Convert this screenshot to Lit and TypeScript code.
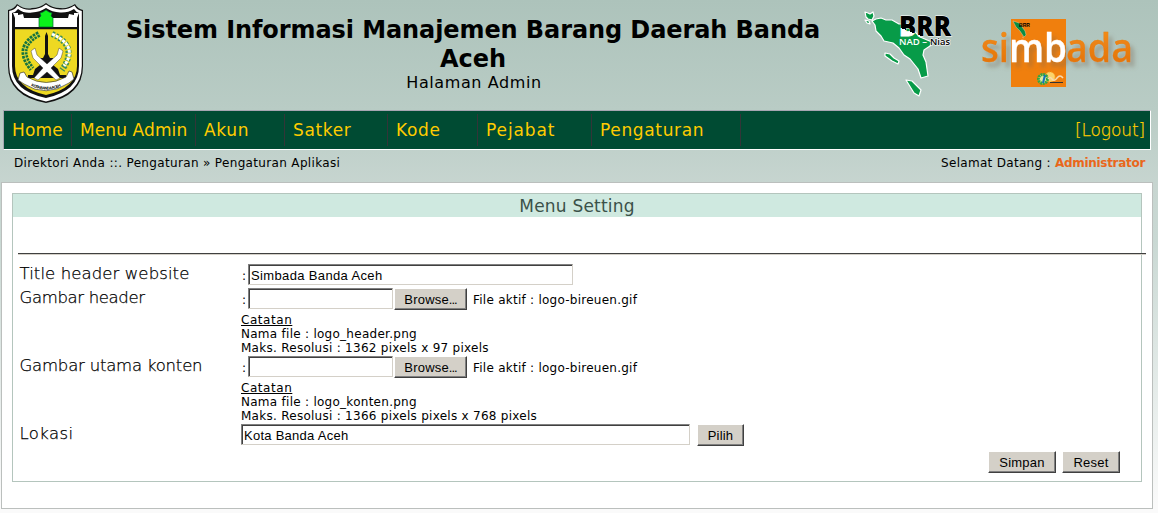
import { LitElement, html, css, svg } from "lit";
import { customElement } from "lit/decorators.js";

const crest = svg`
<path d="M8 10Q14 9 17 4Q25 10 32 8Q40 8 46 3Q52 8 60 8Q68 9 75 4Q78 9 83 10V66Q83 96 46 103Q8 96 8 66Z" fill="#111"/>
<path d="M9.200 11Q15 10 17.500 5.500Q25 11 32 9.500Q40 9 46 4.500Q52 9 60 9.500Q68 10 74.500 5.500Q77 10 81.800 11V66Q81.500 94 46 101.500Q9.500 94 9.200 66Z" fill="#fff"/>
<path d="M12 13Q16 12 18 9Q25 14 32 12.500Q40 12 46 8Q52 12 60 12.500Q68 13 74 9Q76 12 79 13V66Q79 91 46 98Q12 91 12 66Z" fill="#111"/>
<path d="M15 28H77V66Q77 88 46 95Q15 88 15 66Z" fill="#eed922"/>
<path d="M15 27V18L13 13H18V15L23 14L24 18H39V27ZM77 27V18L79 13H74V15L69 14L68 18H53V27Z" fill="#fff"/>
<path d="M39 27V18L41 16L40 13L43 12L46 10L49 12L52 13L51 16L53 18V27Z" fill="#0bf31a" stroke="#063" stroke-width=".7"/>
<path d="M15 28.500H77" stroke="#111" stroke-width="1.500"/>
<path d="M39 34Q14 47 32 69" fill="none" stroke="#16733e" stroke-width="6" stroke-dasharray="2.500 1"/>
<path d="M39 34Q14 47 32 69" fill="none" stroke="#e9df48" stroke-width=".8"/>
<path d="M52 34Q79 46 62 70" fill="none" stroke="#3c8d59" stroke-width="6" stroke-dasharray="2.500 1.500"/>
<path d="M52 34Q79 46 64 66" fill="none" stroke="#fff" stroke-width="3" stroke-dasharray="3 1"/>
<path d="M46.500 32L48 36V54L50 58H53V65L58 69L60 75H66V78H28V75H33L35 69L40 65V58H43L45 54V36Z" fill="#111"/>
<path d="M31 51L35 48L37 55L47 64L57 55L59 48L63 51L61 58L51 68L60 78L56 80L47 72L38 80L34 78L43 68L33 58Z" fill="#fff" stroke="#222" stroke-width=".4"/>
<path d="M20 73L24 72L27 77Q46 88 66 77L69 71L72 72L74 79L69 83Q46 98 24 84L18 80Z" fill="#fff" stroke="#222" stroke-width=".6"/>
<path id="ribbon" d="M31 86Q46 93 62 86" fill="none"/>
<text font-size="4" font-weight="bold" font-family="Liberation Sans, sans-serif"><textPath href="#ribbon" textLength="31">KOTA BANDA ACEH</textPath></text>`;

const island = svg`
<g fill="#079b48" stroke="#fff" stroke-width="1.200" stroke-linejoin="round">
<path d="M872 21L876 19L881 18L886 20L892 20L899 24L905 24L914 31L920 37L932 42L930 46L924 50L923 55L926 62L928 76L921 78L918 69L910 59L904 55L899 48L893 43L884 41L881 36L876 31L875 25Z"/>
<path d="M865 12L868 13L870 14L873 12L874 16L872 20L868 19L866 17ZM865 20L869 21L870 24L867 23Z"/>
<path d="M885 53L890 54L894 58L899 61L898 64L892 61L885 56ZM906 80L912 81L921 90L919 96L914 93Z"/>
</g>`;

@customElement("app-root")
export class AppRoot extends LitElement {
  static styles = css`
    :host {
      display: block;
      box-sizing: border-box;
      width: 1158px;
      height: 513px;
      overflow: hidden;
      color: #000;
      font: 13px/14px "DejaVu Sans", sans-serif;
      background: linear-gradient(#adc3bb 0, #b9ccc5 110px, #c7d5d0 185px, #c9d8d3 240px, #fafafa 505px);
    }
    * { box-sizing: border-box; }
    .header { position: relative; height: 110px; padding: 16px 0 0 98px; }
    .art { position: absolute; inset: 0; width: 1158px; height: 110px; }
    .title { position: relative; width: 750px; text-align: center; }
    h1 { margin: 0; font: bold 24px/29px "DejaVu Sans", sans-serif; letter-spacing: -.09px; }
    .sub { padding-left: 2px; font-size: 16px; line-height: 17px; letter-spacing: .6px; }
    nav {
      display: flex; align-items: center; width: 1148px; height: 40px; margin-left: 3px;
      padding: 0 5px 0 0; background: #004b33; border: 1px solid #fff;
      border-top-color: #a6a6b2; border-left-color: #a6a6b2;
      color: #fc0; font-size: 17px; letter-spacing: .65px;
    }
    .item { height: 32px; padding-left: 8px; border-right: 1px solid #333538; line-height: 33px; white-space: nowrap; }
    .home { width: 68px; letter-spacing: .2px; } .menu { width: 124px; letter-spacing: .1px; } .akun { width: 89px; }
    .satker { width: 103px; } .kode { width: 90px; } .pejabat { width: 114px; letter-spacing: .9px; } .atur { width: 149px; }
    .logout, .label { font-weight: 200; -webkit-text-stroke: .25px currentColor; }
    .logout { margin-left: auto; letter-spacing: -.1px; }
    .crumbs { display: flex; justify-content: space-between; height: 32px; padding: 6px 13px 0 14px; font-size: 12px; letter-spacing: .34px; }
    .user { letter-spacing: .3px; }
    .crumbs b { color: #e9671b; letter-spacing: -.3px; }
    .panel { width: 1152px; height: 327px; margin-left: 1px; padding: 10px; border: 1px solid #bbbfbd; background: #fff; }
    .box { width: 1130px; height: 289px; border: 1px solid #b4c5bd; }
    h2 { margin: 0; height: 23px; background: #cfe9e0; color: #3b5149; text-align: center; font: 17px/25px "DejaVu Sans", sans-serif; letter-spacing: .2px; }
    .rule { width: 1128px; height: 2px; margin: 36px 0 9px 5px; border-top: 1px solid #404040; border-bottom: 1px solid #d4d0c8; }
    .row { display: grid; grid-template-columns: 221px 1fr; padding-left: 7px; }
    .label { font-size: 16.500px; line-height: 20px; letter-spacing: .1px; margin-left: -.5px; }
    .label.tight { letter-spacing: -.35px; }
    .label.mid { letter-spacing: -.2px; }
    .label.wide { letter-spacing: .4px; }
    .line { display: flex; height: 24px; align-items: flex-start; }
    .colon { width: 7px; padding: 5px 0 0 1px; font-size: 12px; }
    .file { margin-left: 6px; padding-top: 5px; font-size: 12px; letter-spacing: .25px; }
    .notes { font-size: 12px; height: 44px; padding-top: 1px; letter-spacing: .27px; }
    .notes div { height: 14px; white-space: nowrap; }
    .notes u { letter-spacing: .55px; }
    input {
      height: 21px; margin: 0; padding: 1px 1px 0 2px; border: 1px solid; border-radius: 0; outline: 0;
      border-color: #808080 #d4d0c8 #d4d0c8 #808080; box-shadow: inset 1px 1px #404040;
      background: #fff; color: #000;
      font: 13px "Liberation Sans", sans-serif; letter-spacing: .36px;
    }
    button {
      height: 22px; margin: 0; padding: 0; border: 1px solid; border-radius: 0;
      border-color: #fff #404040 #404040 #fff; box-shadow: inset -1px -1px #808080;
      background: #d4d0c8; color: #000; font: 13px/19px "Liberation Sans", sans-serif; letter-spacing: .2px;
    }
    .t1 { width: 325px; } .t2 { width: 145px; } .t3 { width: 449px; letter-spacing: .26px; }
    .browse { width: 73px; margin-left: 1px; } .pilih { width: 47px; margin-left: 7px; }
    .dots { letter-spacing: -1px; }
    .actions { display: flex; justify-content: flex-end; gap: 6px; padding: 3px 21px 0 0; }
    .simpan { width: 68px; } .reset { width: 58px; }
  `;

  upload(label: string, spacing: string, name: string, size: string) {
    return html`<div class="row">
      <span class="label ${spacing}">${label}</span>
      <div>
        <div class="line"><span class="colon">:</span><input class="t2" aria-label=${label}><button class="browse">Browse<span class="dots">...</span></button><span class="file">File aktif : logo-bireuen.gif</span></div>
        <div class="notes"><div><u>Catatan</u></div><div>Nama file : ${name}</div><div>Maks. Resolusi : ${size}</div></div>
      </div>
    </div>`;
  }

  render() {
    return html`
      <header class="header">
        <svg class="art" viewBox="0 0 1158 110">
          <defs>
            <filter id="shade" x="-10%" y="-30%" width="130%" height="180%"><feDropShadow dx="4" dy="5" stdDeviation="2" flood-color="#765" flood-opacity=".4"/></filter>
            <linearGradient id="orange" x2="0" y2="1"><stop stop-color="#f7941d"/><stop offset="1" stop-color="#df6c08"/></linearGradient>
            <linearGradient id="split" gradientUnits="userSpaceOnUse" x1="905" y1="40" x2="912" y2="22"><stop offset=".5" stop-color="#fff"/><stop offset=".5" stop-color="#000"/></linearGradient>
          </defs>
          ${crest}${island}
          <text x="899" y="36" font-family="Open Sans, sans-serif" font-weight="800" font-size="28" fill="url(#split)" stroke="#fff" stroke-width=".8" paint-order="stroke" textLength="52" lengthAdjust="spacingAndGlyphs">BRR</text>
          <g font-family="Open Sans, sans-serif" font-size="9.500" font-weight="600">
            <text x="899" y="45" fill="#fff" textLength="28" lengthAdjust="spacingAndGlyphs">NAD –</text>
            <text x="930" y="45" stroke="#fff" stroke-width="1.200" paint-order="stroke" textLength="20" lengthAdjust="spacingAndGlyphs">Nias</text>
          </g>
          <path d="M1011 19H1066V87H1011Z" fill="#f07f0d"/>
          <path d="M1013 21L1019 23L1025 31L1026 35L1024 37L1020 31L1016 27ZM1022 37L1024 38" fill="#088d42" stroke="#fff" stroke-width=".3"/>
          <text x="1019" y="27" font-size="6" font-weight="bold" font-family="Liberation Sans, sans-serif" textLength="11" lengthAdjust="spacingAndGlyphs">BRR</text>
          <g font-family="Open Sans, sans-serif" font-size="40" font-weight="600" filter="url(#shade)">
            <g fill="url(#orange)" stroke="#e8800f" stroke-width=".3">
              <text x="981" y="62" textLength="28" lengthAdjust="spacingAndGlyphs">si</text>
              <text x="1066" y="62" textLength="67" lengthAdjust="spacingAndGlyphs">ada</text>
            </g>
            <text x="1009" y="62" fill="#fff" stroke="#fff" stroke-width=".3" textLength="58" lengthAdjust="spacingAndGlyphs">mb</text>
          </g>
          <circle cx="1050" cy="77" r="5" fill="#fbd36b" stroke="#ffab29" stroke-dasharray="1 1"/>
          <circle cx="1043" cy="79" r="4.500" fill="#dfe8a0" stroke="#35a642" stroke-width="3" stroke-dasharray="2 .6"/>
          <path d="M1045 75L1043 83" stroke="#1571bd" stroke-width="2"/>
          <path d="M1048 79Q1050 76 1052 79T1057 78T1063 78" fill="none" stroke="#f7d9b0" stroke-width="1.500"/>
          <path d="M1050 82.500H1063" stroke="#333" stroke-width="1"/>
        </svg>
        <div class="title"><h1>Sistem Informasi Manajemen Barang Daerah Banda Aceh</h1><div class="sub">Halaman Admin</div></div>
      </header>
      <nav>
        <span class="item home">Home</span><span class="item menu">Menu Admin</span><span class="item akun">Akun</span>
        <span class="item satker">Satker</span><span class="item kode">Kode</span><span class="item pejabat">Pejabat</span>
        <span class="item atur">Pengaturan</span><span class="logout">[Logout]</span>
      </nav>
      <div class="crumbs"><span>Direktori Anda ::. Pengaturan » Pengaturan Aplikasi</span><span class="user">Selamat Datang : <b>Administrator</b></span></div>
      <main class="panel"><section class="box">
        <h2>Menu Setting</h2>
        <div class="rule"></div>
        <div class="row"><span class="label">Title header website</span>
          <div class="line"><span class="colon">:</span><input class="t1" aria-label="Title header website" .value=${"Simbada Banda Aceh"}></div></div>
        ${this.upload("Gambar header", "tight", "logo_header.png", "1362 pixels x 97 pixels")}
        ${this.upload("Gambar utama konten", "mid", "logo_konten.png", "1366 pixels pixels x 768 pixels")}
        <div class="row"><span class="label wide">Lokasi</span>
          <div class="line"><input class="t3" aria-label="Lokasi" .value=${"Kota Banda Aceh"}><button class="pilih">Pilih</button></div></div>
        <div class="actions"><button class="simpan">Simpan</button><button class="reset">Reset</button></div>
      </section></main>`;
  }
}
